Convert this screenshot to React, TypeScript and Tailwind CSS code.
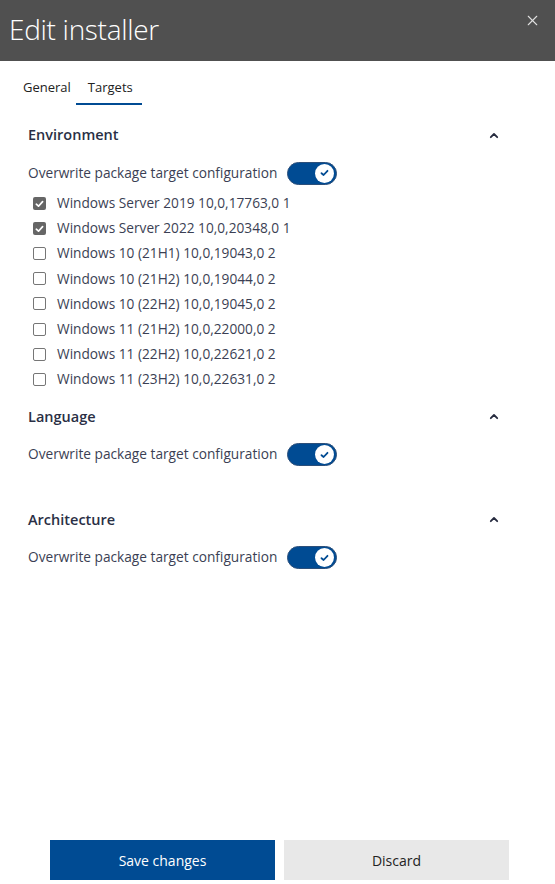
import { X } from 'lucide-react'

const environments = [
  { label: 'Windows Server 2019 10,0,17763,0 1', checked: true },
  { label: 'Windows Server 2022 10,0,20348,0 1', checked: true },
  { label: 'Windows 10 (21H1) 10,0,19043,0 2', checked: false },
  { label: 'Windows 10 (21H2) 10,0,19044,0 2', checked: false },
  { label: 'Windows 10 (22H2) 10,0,19045,0 2', checked: false },
  { label: 'Windows 11 (21H2) 10,0,22000,0 2', checked: false },
  { label: 'Windows 11 (22H2) 10,0,22621,0 2', checked: false },
  { label: 'Windows 11 (23H2) 10,0,22631,0 2', checked: false },
]

function Toggle() {
  return (
    <div className="flex h-[23px] w-[50px] items-center justify-end rounded-full border border-[#2c4f7a] bg-[#004b93] px-[2px]">
      <div className="flex h-[19px] w-[19px] items-center justify-center rounded-full bg-white">
        <svg width="9" height="8" viewBox="0 0 9 8" fill="none">
          <path d="M1.5 4.2 L3.6 6 L7.5 1.8" stroke="#004b93" strokeWidth="1.8" strokeLinecap="round" strokeLinejoin="round" />
        </svg>
      </div>
    </div>
  )
}

function Checkbox({ checked }: { checked: boolean }) {
  if (checked) {
    return (
      <span className="flex h-[13px] w-[13px] items-center justify-center rounded-[2px] bg-[#666666]">
        <svg width="9" height="8" viewBox="0 0 9 8" fill="none">
          <path d="M1.3 4.2 L3.5 6.2 L7.6 1.6" stroke="white" strokeWidth="1.7" strokeLinecap="round" strokeLinejoin="round" />
        </svg>
      </span>
    )
  }
  return <span className="h-[13px] w-[13px] rounded-[2px] border border-[#767676] bg-white" />
}

function Chevron() {
  return (
    <svg width="10" height="7" viewBox="0 0 10 7" fill="none">
      <path d="M1.8 5.2 L5 2 L8.2 5.2" stroke="#262b3f" strokeWidth="1.8" strokeLinecap="round" strokeLinejoin="round" />
    </svg>
  )
}

function Section({ title, children }: { title: string; children?: React.ReactNode }) {
  return (
    <section>
      <div className="flex h-[30px] items-center justify-between pr-[56px]">
        <h2 className="text-[14.5px] font-semibold text-[#2a2f45]">{title}</h2>
        <Chevron />
      </div>
      <div className="mt-[10px] flex h-[26px] items-center gap-[10px]">
        <span className="text-[13.7px] text-[#3b3f54]">Overwrite package target configuration</span>
        <Toggle />
      </div>
      {children}
    </section>
  )
}

export default function App() {
  return (
    <div
      className="flex min-h-screen flex-col bg-white"
      style={{ fontFamily: '"Open Sans", "Noto Sans", sans-serif' }}
    >
      {/* Header */}
      <header className="flex h-[61px] items-center justify-between bg-[#505050] pl-[9px] pr-[14px]">
        <h1 className="pb-[4px] text-[28px] font-light tracking-[-0.3px] text-white">Edit installer</h1>
        <X className="mb-[20px] h-[17px] w-[17px] text-[#e0e0e0]" strokeWidth={1.5} />
      </header>

      {/* Tabs */}
      <nav className="flex h-[44px] items-stretch pl-[11px]">
        <button className="flex items-center border-b-2 border-transparent pl-[12px] pr-[5px] pt-[11px] text-[13px] text-[#222]">
          General
        </button>
        <button className="flex items-center border-b-2 border-[#004b93] pl-[12px] pr-[9px] pt-[11px] text-[13px] text-[#222]">
          Targets
        </button>
      </nav>

      {/* Content */}
      <main className="pl-[28px] pt-[15px]">
        <Section title="Environment">
          <ul className="mt-[5px] pl-[5px]">
            {environments.map((env) => (
              <li key={env.label} className="flex h-[25.1px] items-center gap-[11px]">
                <Checkbox checked={env.checked} />
                <span className="text-[13.7px] text-[#3b3f54]">{env.label}</span>
              </li>
            ))}
          </ul>
        </Section>
        <div className="h-[10px]" />
        <Section title="Language">
          <div className="h-[25px]" />
        </Section>
        <div className="h-[12px]" />
        <Section title="Architecture" />
      </main>

      {/* Footer */}
      <footer className="mt-auto flex gap-[9px] pb-[4px] pl-[50px]">
        <button className="h-[40px] w-[225px] bg-[#004b93] text-[14px] text-white">Save changes</button>
        <button className="h-[40px] w-[225px] bg-[#e8e8e8] text-[14px] text-[#222]">Discard</button>
      </footer>
    </div>
  )
}
